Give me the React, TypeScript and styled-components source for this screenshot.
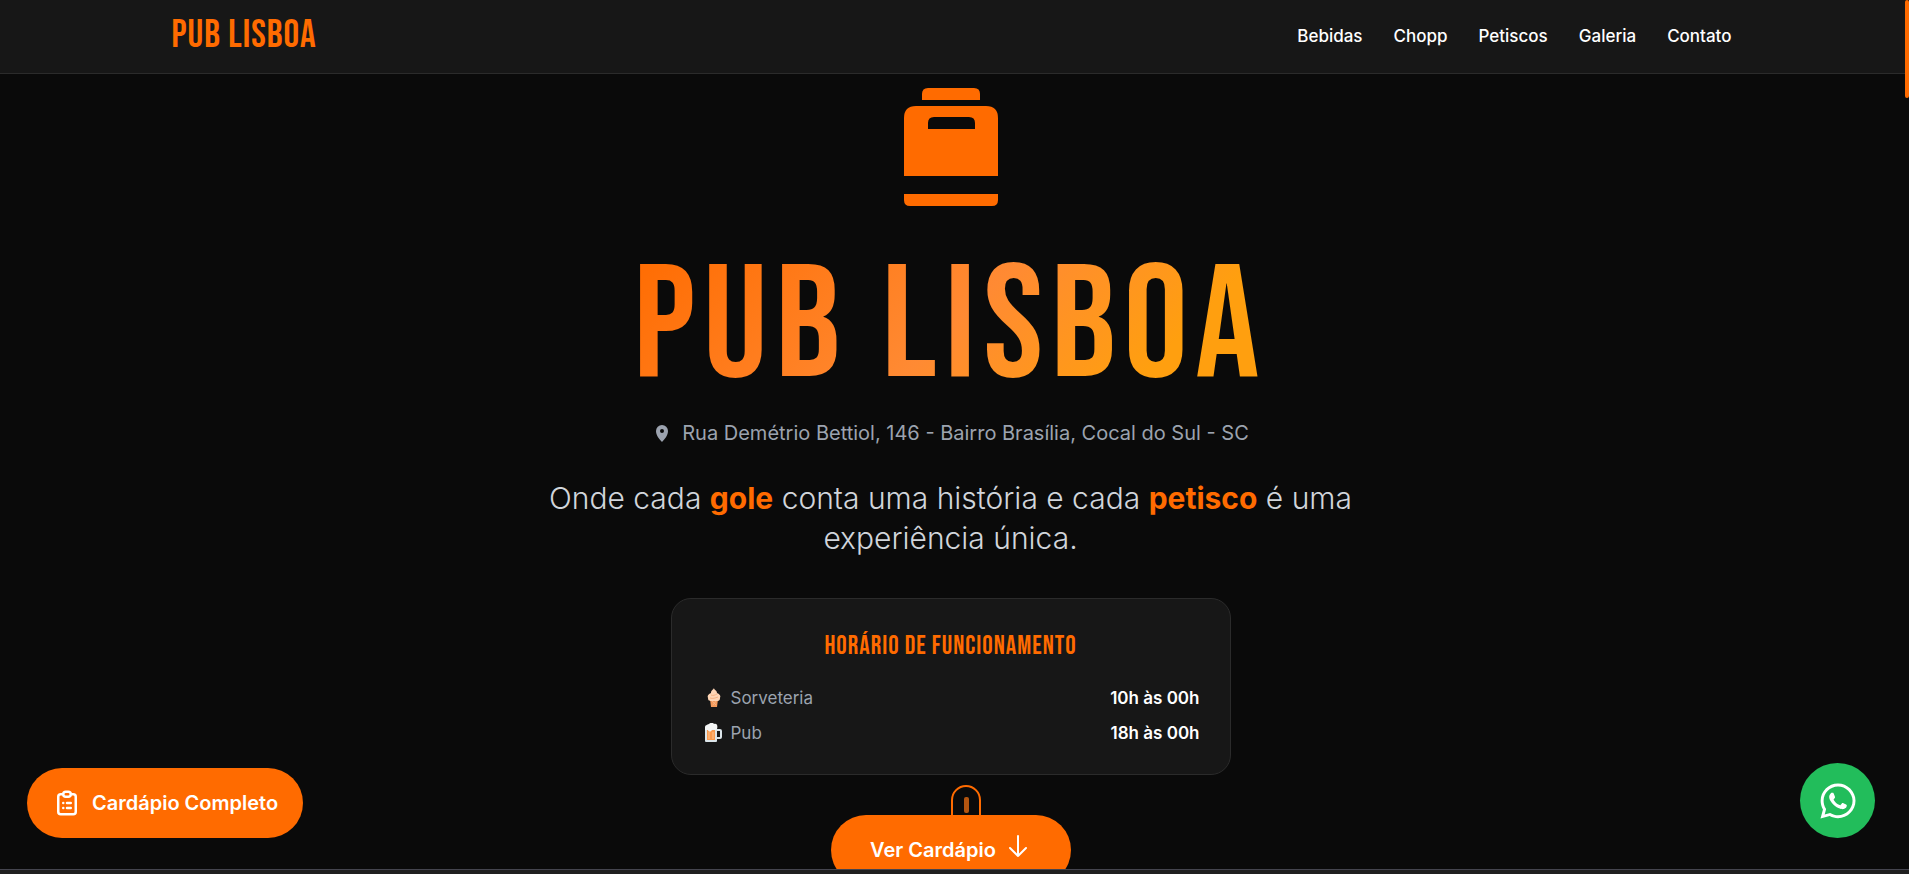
import React from 'react';
import styled, { createGlobalStyle } from 'styled-components';
import { FaWhatsapp } from 'react-icons/fa';

const display = `'Bebas Neue', 'Liberation Sans Narrow', sans-serif`;
const orange = '#ff6b00';

const Global = createGlobalStyle`
  * { box-sizing: border-box; }
  body { margin: 0; background: #0a0a0a; color: #fff; font-family: Inter, 'Liberation Sans', sans-serif; }
  h1, h2, p, dl, dd { margin: 0; padding: 0; }
`;

const Page = styled.div`
  display: flex;
  flex-direction: column;
  height: 100vh;
  overflow: hidden;
`;

const Viewport = styled.div`
  position: relative;
  flex: 1;
  min-height: 0;
  padding-right: 8px;
  overflow: hidden;
`;

const ScrollThumb = styled.div`
  position: absolute;
  top: 0;
  right: 0;
  width: 4px;
  height: 98px;
  background: ${orange};
  border-radius: 4px;
`;

const Header = styled.header`
  height: 74px;
  margin-right: -4px;
  padding-right: 2px;
  background: #171717;
  border-bottom: 1px solid #2b2b2b;
`;

const HeaderInner = styled.div`
  display: flex;
  align-items: center;
  justify-content: space-between;
  max-width: 1560px;
  height: 100%;
  margin: 0 auto;
  padding-bottom: 2px;
`;

const Brand = styled.a`
  font: 400 39px/44px ${display};
  letter-spacing: 1px;
  color: ${orange};
  text-decoration: none;
`;

const Nav = styled.nav`
  display: flex;
  gap: 31px;
`;

const NavLink = styled.a`
  font-size: 17px;
  line-height: 28px;
  font-weight: 500;
  color: #fff;
  text-decoration: none;
`;

const Hero = styled.main`
  display: flex;
  flex-direction: column;
  align-items: center;
  padding-top: 14px;
  text-align: center;
`;

const Emblem = styled.svg`
  width: 94px;
  height: 118px;
`;

const Title = styled.h1`
  margin-top: 42px;
  font: 400 160px/160px ${display};
  letter-spacing: 8px;
  color: transparent;
  background: linear-gradient(135deg, #ff6b00 0%, #ff8a33 50%, #ff9f0f 80%);
  background-clip: text;
  -webkit-background-clip: text;
`;

const Address = styled.p`
  display: flex;
  align-items: center;
  gap: 14px;
  margin-top: 9px;
  padding-left: 4px;
  font-size: 20px;
  line-height: 32px;
  color: #9ca3af;
`;

const Tagline = styled.p`
  max-width: 860px;
  margin-top: 29px;
  font-size: 30px;
  line-height: 40px;
  font-weight: 300;
  color: #d1d5db;
`;

const Highlight = styled.strong`
  font-weight: 700;
  color: ${orange};
`;

const Hours = styled.section`
  width: 560px;
  max-width: 100%;
  margin-top: 40px;
  padding: 30px 30px 26px;
  background: #171717;
  border: 1px solid #2b2b2b;
  border-radius: 20px;
`;

const HoursTitle = styled.h2`
  font: 400 26px/36px ${display};
  letter-spacing: 1px;
  color: ${orange};
`;

const HoursList = styled.dl`
  display: grid;
  gap: 5px;
  margin-top: 18px;
`;

const HoursRow = styled.div`
  display: flex;
  justify-content: space-between;
  font-size: 17px;
  line-height: 30px;
`;

const Place = styled.dt`
  display: flex;
  align-items: center;
  gap: 8px;
  padding-left: 3px;
  color: #9ca3af;
`;

const Time = styled.dd`
  font-weight: 600;
`;

const Actions = styled.div`
  position: relative;
  margin-top: 40px;
`;

const ScrollHint = styled.svg`
  position: absolute;
  left: 120px;
  top: -30px;
  width: 30px;
  height: 52px;
`;

const MenuButton = styled.a`
  position: relative;
  display: flex;
  align-items: center;
  justify-content: center;
  gap: 9px;
  width: 240px;
  height: 70px;
  border-radius: 35px;
  background: ${orange};
  color: #fff;
  font-size: 20px;
  font-weight: 600;
  text-decoration: none;
`;

const FloatingMenu = styled.button`
  position: absolute;
  left: 27px;
  bottom: 31px;
  display: flex;
  align-items: center;
  gap: 10px;
  height: 70px;
  padding: 0 25px;
  border: 0;
  border-radius: 35px;
  background: ${orange};
  color: #fff;
  font: 600 20px/28px Inter, 'Liberation Sans', sans-serif;
`;

const WhatsApp = styled.a`
  position: absolute;
  right: 34px;
  bottom: 31px;
  display: grid;
  place-items: center;
  width: 75px;
  height: 75px;
  border-radius: 50%;
  background: #22bd5b;
  color: #fff;
`;

const Edge = styled.footer`
  height: 5px;
  background: #202020;
  border-top: 1px solid #44444e;
`;

const IceCream = () => (
  <svg width="18" height="20" viewBox="0 0 18 20" aria-hidden="true">
    <path d="M5 11h8l-1 8H6z" fill="#f59a5b" />
    <path d="M9 0c0 2 3 2 3 5 3 1 4 3 3 5 0 3-2 3-3 3H6c-1 0-3 0-3-3-1-2 0-4 3-5 0-3 2-3 3-5z" fill="#ffd5b5" />
    <path d="M6 7c2 1 4 0 6-1M5 10c3 1 5 0 8-1M7 13l4 4m0-4l-3 4" fill="none" stroke="#f7b282" />
  </svg>
);

const Beer = () => (
  <svg width="18" height="20" viewBox="0 0 18 20" aria-hidden="true">
    <path d="M12 7h3q1 0 1 1v6q0 1-1 1h-3" fill="none" stroke="#dce5ea" strokeWidth="2" />
    <path d="M0 4h12v14q0 1-1 1H1q-1 0-1-1z" fill="#dce5ea" />
    <path d="M2 7h8v10H2z" fill="#f99b50" />
    <path d="M4 9v7M8 9v7" stroke="#ffc28d" />
    <path d="M0 7V4c0-2 2-2 4-3 2-2 5-1 5 0 3-1 4 2 3 5-2 2-4 0-5 1-2 3-4 1-4 0z" fill="#f4f5f5" />
  </svg>
);

const ClipboardIcon = () => (
  <svg width="30" height="30" viewBox="0 0 24 24" fill="none" stroke="currentColor" strokeWidth="2" strokeLinecap="round" strokeLinejoin="round" aria-hidden="true">
    <path d="M9 5H7a2 2 0 00-2 2v12a2 2 0 002 2h10a2 2 0 002-2V7a2 2 0 00-2-2h-2M9 5a2 2 0 002 2h2a2 2 0 002-2M9 5a2 2 0 012-2h2a2 2 0 012 2m-3 7h3m-3 4h3m-6-4h.01M9 16h.01" />
  </svg>
);

const links = ['Bebidas', 'Chopp', 'Petiscos', 'Galeria', 'Contato'];

export default function App() {
  return (
    <Page>
      <Global />
      <Viewport>
        <Header>
          <HeaderInner>
            <Brand href="#inicio">PUB LISBOA</Brand>
            <Nav>
              {links.map((l) => (
                <NavLink key={l} href={`#${l.toLowerCase()}`}>{l}</NavLink>
              ))}
            </Nav>
          </HeaderInner>
        </Header>
        <Hero id="inicio">
          <Emblem viewBox="0 0 94 118" fill={orange} aria-hidden="true">
            <path d="M18 12V6q0-6 6-6h46q6 0 6 6v6z" />
            <path fillRule="evenodd" d="M0 88V30q0-12 12-12h70q12 0 12 12v58zM24 41h47v-6q0-6-6-6H30q-6 0-6 6z" />
            <path d="M0 106h94v6q0 6-6 6H6q-6 0-6-6z" />
          </Emblem>
          <Title>PUB LISBOA</Title>
          <Address>
            <svg width="12" height="17" viewBox="0 0 12 17" fill="currentColor" aria-hidden="true">
              <path fillRule="evenodd" d="M6 0a6 6 0 0 1 6 6c0 4-3 8-6 11C3 14 0 10 0 6a6 6 0 0 1 6-6zm0 4a2 2 0 1 0 0 4 2 2 0 0 0 0-4z" />
            </svg>
            Rua Demétrio Bettiol, 146 - Bairro Brasília, Cocal do Sul - SC
          </Address>
          <Tagline>
            Onde cada <Highlight>gole</Highlight> conta uma história e cada <Highlight>petisco</Highlight> é uma experiência única.
          </Tagline>
          <Hours>
            <HoursTitle>HORÁRIO DE FUNCIONAMENTO</HoursTitle>
            <HoursList>
              <HoursRow><Place><IceCream />Sorveteria</Place><Time>10h às 00h</Time></HoursRow>
              <HoursRow><Place><Beer />Pub</Place><Time>18h às 00h</Time></HoursRow>
            </HoursList>
          </Hours>
          <Actions>
            <ScrollHint viewBox="0 0 30 52" aria-hidden="true">
              <rect x="1" y="1" width="28" height="50" rx="14" fill="none" stroke={orange} strokeWidth="2" />
              <rect x="13" y="12" width="5" height="16" rx="2" fill="#b35510" />
            </ScrollHint>
            <MenuButton href="#bebidas">
              Ver Cardápio
              <svg width="26" height="30" viewBox="0 0 26 30" fill="none" stroke="#fff" strokeWidth="2" strokeLinecap="round" strokeLinejoin="round" aria-hidden="true">
                <path d="M13 1v20M5 13l8 8 8-8" />
              </svg>
            </MenuButton>
          </Actions>
        </Hero>
        <FloatingMenu type="button">
          <ClipboardIcon />
          Cardápio Completo
        </FloatingMenu>
        <WhatsApp href="#contato" aria-label="WhatsApp"><FaWhatsapp size={40} /></WhatsApp>
        <ScrollThumb />
      </Viewport>
      <Edge />
    </Page>
  );
}
